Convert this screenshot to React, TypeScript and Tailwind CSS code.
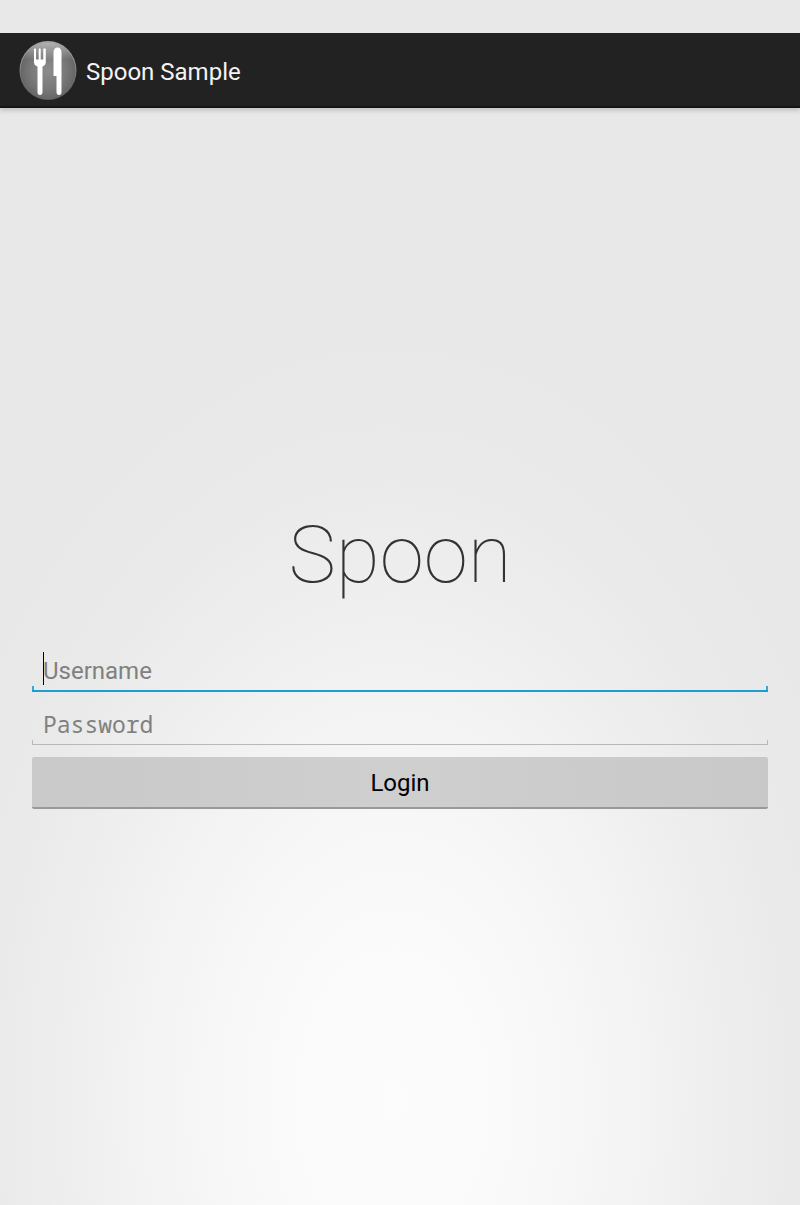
function SpoonLogo() {
  return (
    <svg viewBox="0 0 60 62" className="h-[62px] w-[60px] shrink-0" aria-hidden="true">
      <defs>
        <radialGradient id="disc" cx="0.5" cy="0.5" r="0.55">
          <stop offset="0" stopColor="#8c8c8c" />
          <stop offset="0.55" stopColor="#7a7a7a" />
          <stop offset="1" stopColor="#626262" />
        </radialGradient>
        <linearGradient id="rim" x1="0" y1="0" x2="0" y2="1">
          <stop offset="0" stopColor="#a8a8a8" />
          <stop offset="0.35" stopColor="#8c8c8c" />
          <stop offset="1" stopColor="#555555" />
        </linearGradient>
        <linearGradient id="gloss" x1="0" y1="0" x2="0" y2="1">
          <stop offset="0" stopColor="#ffffff" stopOpacity="0.5" />
          <stop offset="0.3" stopColor="#ffffff" stopOpacity="0" />
        </linearGradient>
      </defs>
      <ellipse cx="30" cy="31.500" rx="28.500" ry="29.500" fill="url(#rim)" />
      <ellipse cx="30" cy="32" rx="27.500" ry="28.500" fill="url(#disc)" />
      <ellipse cx="30" cy="32" rx="27.500" ry="28.500" fill="url(#gloss)" />
      <path
        d="M16 10 Q17 8.500 18 10 V20.500 H20.700 V10 Q21.700 8.500 22.700 10 V20.500 H25.300 V10 Q26.500 8.500 27.800 10 V23 Q27.800 26.500 24.500 27.500 V53 Q24.500 56 22 56 Q19.500 56 19.500 53 V27.500 Q16 26.500 16 23 Z"
        fill="#ffffff"
      />
      <path
        d="M35.500 14 Q35.500 8.500 39.500 8.500 Q43.500 8.500 43.500 14 V53 Q43.500 56 41 56 Q38.500 56 38.500 53 V37 H35.500 Z"
        fill="#ffffff"
      />
    </svg>
  );
}

export default function App() {
  return (
    <div className="flex min-h-screen flex-col bg-[#e8e8e8] bg-[radial-gradient(ellipse_510px_800px_at_49%_1100px,#fcfcfc_0%,#fbfbfb_14%,#f7f7f7_36%,#efefef_62%,#eaeaea_78%,#e8e8e8_100%)] font-[Roboto,sans-serif] pt-[33px]">
      <header className="flex h-[75px] items-center border-b-2 border-[#151515] bg-[#222222] pl-[18px] shadow-[0_3px_4px_rgba(0,0,0,0.15)]">
        <SpoonLogo />
        <span className="pl-2 pt-1 text-2xl text-[#f3f3f3]">Spoon Sample</span>
      </header>
      <main className="flex flex-1 flex-col justify-center px-8">
        <h1 className="pb-10 text-center text-[80px] leading-[106px] font-thin text-[#333333]">Spoon</h1>
        <form onSubmit={(event) => event.preventDefault()}>
          <div className="relative mb-3 border-b-2 border-[#1a9fd0] before:absolute before:bottom-0 before:left-0 before:h-1 before:w-0.5 before:bg-[#33a9d6] after:absolute after:right-0 after:bottom-0 after:h-1 after:w-0.5 after:bg-[#33a9d6]">
            <input
              type="text"
              aria-label="Username"
              placeholder="Username"
              className="block h-[42px] w-full bg-transparent px-[11px] pt-1 text-2xl text-black outline-none placeholder:text-[#808080]"
            />
            <span className="absolute top-1 left-[11px] h-[33px] w-px bg-black" />
          </div>
          <div className="relative mb-3 border-b border-[#b8b8b8] before:absolute before:bottom-0 before:left-0 before:h-1 before:w-px before:bg-[#b8b8b8] after:absolute after:right-0 after:bottom-0 after:h-1 after:w-px after:bg-[#b8b8b8]">
            <input
              type="password"
              aria-label="Password"
              placeholder="Password"
              className="block h-10 w-full bg-transparent px-[11px] font-['Noto_Sans_Mono','DejaVu_Sans_Mono',monospace] text-[23px] text-black outline-none placeholder:text-[#808080]"
            />
          </div>
          <button
            type="submit"
            className="mb-0.5 block h-[52px] w-full rounded-xs border-b-2 border-[#999999] bg-linear-to-r from-[#c9c9c9] via-[#cfcfcf] to-[#c8c8c8] pt-0.5 text-2xl text-black"
          >
            Login
          </button>
        </form>
      </main>
    </div>
  );
}
